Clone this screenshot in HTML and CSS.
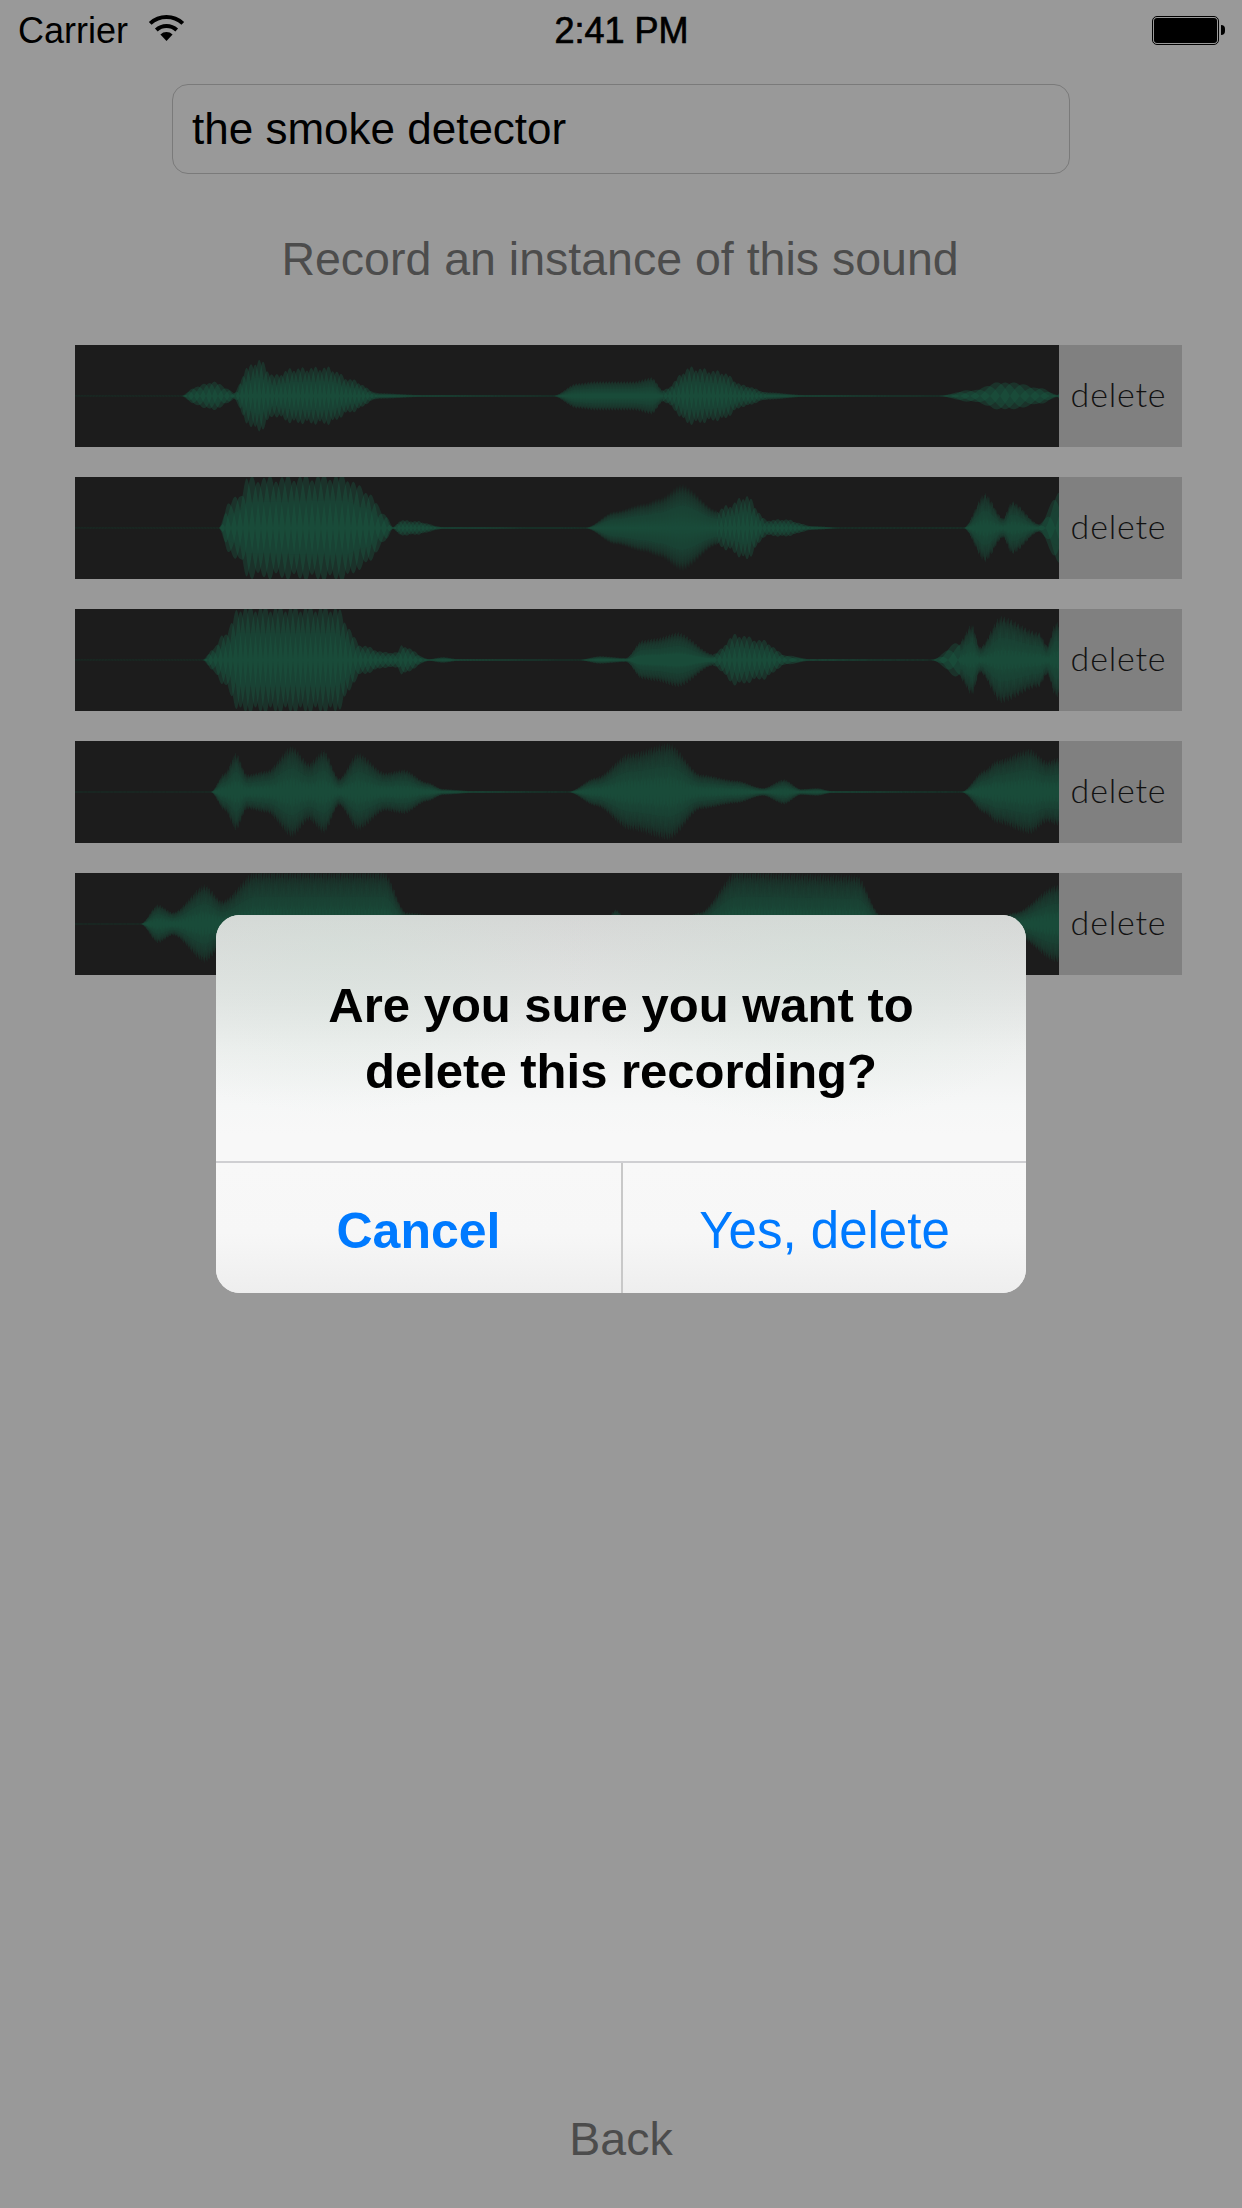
FILE: index.html
```html
<!DOCTYPE html>
<html lang="en">
<head>
  <meta charset="UTF-8">
  <title>Record Sound</title>
  <link rel="stylesheet" href="styles.css">
</head>
<body>
  <div class="status-bar">
    <div class="status-left">
      <span>Carrier</span>
      <svg class="wifi" width="37" height="26" viewBox="0 0 37 26">
        <path d="M2.2 8.4A24 24 0 0 1 34.8 8.4" fill="none" stroke="#000" stroke-width="4"/>
        <path d="M8.3 15A15 15 0 0 1 28.7 15" fill="none" stroke="#000" stroke-width="4"/>
        <path d="M18.5 26L12.4 19.5A9 9 0 0 1 24.6 19.5Z" fill="#000"/>
      </svg>
    </div>
    <div class="status-time">2:41 PM</div>
    <div class="status-right">
      <div class="battery"><div class="battery-level"></div></div>
      <div class="battery-nub"></div>
    </div>
  </div>

  <div class="name-field">the smoke detector</div>
  <div class="prompt">Record an instance of this sound</div>

  <div class="recordings">
    <div class="recording"><svg class="wave" viewBox="0 0 984 102"></svg><div class="delete">delete</div></div>
    <div class="recording"><svg class="wave" viewBox="0 0 984 102"></svg><div class="delete">delete</div></div>
    <div class="recording"><svg class="wave" viewBox="0 0 984 102"></svg><div class="delete">delete</div></div>
    <div class="recording"><svg class="wave" viewBox="0 0 984 102"></svg><div class="delete">delete</div></div>
    <div class="recording"><svg class="wave" viewBox="0 0 984 102"></svg><div class="delete">delete</div></div>
  </div>

  <div class="back">Back</div>

  <div class="alert-layer">
    <div class="alert">
      <div class="alert-message">Are you sure you want to<br>delete this recording?</div>
      <div class="alert-buttons">
        <div class="alert-button cancel">Cancel</div>
        <div class="alert-button confirm">Yes, delete</div>
      </div>
    </div>
  </div>

  <script src="waves.js"></script>
</body>
</html>
```

FILE: styles.css
```css
body {
  margin: 0;
  width: 1242px;
  height: 2208px;
  background-color: #999999;
  font-family: "Liberation Sans", Arial, sans-serif;
  display: flex;
  flex-direction: column;
  overflow: hidden;
  position: relative;
}

.status-bar {
  height: 60px;
  padding: 2px 17px 0 18px;
  box-sizing: border-box;
  display: grid;
  grid-template-columns: 1fr auto 1fr;
  align-items: center;
  color: #000;
  font-size: 36px;
}

.status-left {
  display: flex;
  align-items: center;
  gap: 20px;
}

.wifi {
  margin-top: -6px;
}

.status-time {
  -webkit-text-stroke: 0.7px #000;
}

.status-right {
  display: flex;
  align-items: center;
  justify-content: flex-end;
  gap: 2px;
  margin-top: -2px;
}

.battery {
  width: 63px;
  height: 25px;
  padding: 1px;
  border: 1px solid #000;
  border-radius: 5px;
}

.battery-level {
  height: 100%;
  background-color: #000;
  border-radius: 3px;
}

.battery-nub {
  width: 4px;
  height: 10px;
  background-color: #000;
  border-radius: 0 5px 5px 0;
}

.name-field {
  box-sizing: border-box;
  width: 898px;
  height: 90px;
  margin: 24px auto 0;
  padding-left: 19px;
  display: flex;
  align-items: center;
  border: 1px solid #7a7a7a;
  border-radius: 16px;
  color: #000;
  font-size: 44px;
}

.prompt {
  height: 60px;
  margin-top: 55px;
  padding-right: 2px;
  line-height: 60px;
  text-align: center;
  color: #4c4c4c;
  font-size: 46.5px;
}

.recordings {
  margin: 56px 60px 0 75px;
  display: flex;
  flex-direction: column;
  gap: 30px;
}

.recording {
  height: 102px;
  display: flex;
}

.wave {
  width: 984px;
  height: 102px;
  background-color: #1c1c1c;
  display: block;
}

.delete {
  flex: 1;
  box-sizing: border-box;
  padding: 0 4px 5px 0;
  display: flex;
  align-items: center;
  justify-content: center;
  background-color: #808080;
  color: #111111;
  font-family: Lato, sans-serif;
  font-weight: 300;
  font-size: 34px;
  letter-spacing: 0.8px;
}

.back {
  margin-top: auto;
  margin-bottom: 39px;
  height: 60px;
  line-height: 60px;
  text-align: center;
  color: #4c4c4c;
  font-size: 46.5px;
}

.alert-layer {
  position: absolute;
  inset: 0;
  display: flex;
  align-items: center;
  justify-content: center;
}

.alert {
  width: 810px;
  height: 378px;
  border-radius: 24px;
  overflow: hidden;
  display: flex;
  flex-direction: column;
  background-color: #f8f8f8;
}

.alert-message {
  box-sizing: border-box;
  height: 248px;
  padding-top: 57px;
  border-bottom: 2px solid #cfcfd2;
  text-align: center;
  color: #000;
  font-size: 49px;
  font-weight: bold;
  line-height: 66px;
  background-image:
    radial-gradient(ellipse 260px 170px at 120px 30px, rgba(205, 226, 214, 0.3), transparent),
    radial-gradient(ellipse 260px 170px at 600px 40px, rgba(205, 226, 214, 0.3), transparent),
    linear-gradient(to bottom, #d6d7d6 0, #e2e4e3 80px, #eef0ef 135px, #f6f7f7 190px, #f8f8f8 220px);
}

.alert-buttons {
  flex: 1;
  display: grid;
  grid-template-columns: 1fr 1fr;
  background-image: linear-gradient(to bottom, #f8f8f8 0, #f7f7f7 70px, #eeeeee 130px);
}

.alert-button {
  padding-top: 5px;
  display: flex;
  align-items: center;
  justify-content: center;
  color: #007aff;
  font-size: 51px;
}

.alert-button.cancel {
  font-size: 50px;
  font-weight: bold;
}

.alert-button.confirm {
  border-left: 2px solid #c8c8c8;
}
```

FILE: waves.js
```js
// envelope points are [x, half height], segments are [end x, lobe spacing]
const WAVES = [
  {
    env: [[0,0.3],[107,0.3],[119,9],[138,15],[153,8],[159,3],[172,29],[184,37],[199,21],[218,28],[253,29],[276,17],[303,3],[349,1],[479,0.4],[502,13],[521,15],[559,15],[577,19],[588,6],[615,29],[646,25],[669,11],[692,4],[730,1],[864,0.4],[895,6],[930,15],[964,9],[983,1],[984,3]],
    seg: [[107,3],[159,18],[303,13],[588,3],[692,13],[864,3],[984,30]]
  },
  {
    env: [[0,0.3],[144,0.3],[153,25],[165,35],[172,51],[268,54],[291,39],[310,15],[318,1],[326,8],[341,7],[368,1],[511,0.4],[540,17],[570,25],[584,30],[607,44],[642,18],[653,23],[671,33],[692,8],[709,9],[738,2],[765,0.4],[889,0.4],[910,35],[928,10],[937,27],[964,4],[983,35],[984,35]],
    seg: [[144,3],[318,18],[368,12],[642,3],[738,13],[964,3.5],[984,30]]
  },
  {
    env: [[0,0.3],[128,0.3],[138,12],[150,28],[165,54],[260,54],[287,15],[310,8],[322,8],[327,15],[354,1],[368,3],[383,1],[505,0.4],[525,4],[551,2],[567,20],[580,22],[603,28],[638,6],[661,26],[688,20],[711,5],[734,1],[857,0.4],[884,18],[897,36],[905,13],[926,44],[964,28],[972,15],[981,38],[984,38]],
    seg: [[128,3],[354,15],[638,3],[711,15],[885,30],[984,3.5]]
  },
  {
    env: [[0,0.3],[136,0.3],[150,20],[161,40],[172,18],[192,22],[217,47],[234,30],[249,43],[264,14],[283,40],[310,20],[329,23],[352,10],[368,3],[398,1],[494,0.4],[521,15],[555,40],[594,50],[626,18],[661,12],[688,4],[709,13],[726,3],[742,4],[757,1],[887,0.4],[910,23],[922,33],[955,44],[972,32],[983,35],[984,35]],
    seg: [[984,2.6]]
  },
  {
    env: [[0,0.3],[66,0.3],[83,20],[98,12],[130,40],[147,24],[181,54],[309,54],[331,12],[400,2],[500,0.4],[530,4],[541,15],[552,4],[600,3],[625,12],[662,54],[782,50],[805,10],[880,2],[920,5],[940,12],[982,40],[984,40]],
    seg: [[984,2.6]]
  }
];

const MID = 51;

function envelope(points, x) {
  for (let i = 1; i < points.length; i++) {
    if (x <= points[i][0]) {
      const a = points[i - 1];
      const b = points[i];
      const t = (x - a[0]) / (b[0] - a[0]);
      // smooth the corners so the peaks come out round
      const s = t * t * (3 - 2 * t);
      return a[1] + (b[1] - a[1]) * (0.15 * t + 0.85 * s);
    }
  }
  return 0;
}

function shapePath(samples, heightAt) {
  const top = [];
  const bottom = [];
  samples.forEach(sample => {
    const h = heightAt(sample);
    top.push(sample.x + " " + (MID - h * 1.02).toFixed(1));
    bottom.unshift(sample.x + " " + (MID + h).toFixed(1));
  });
  return "M" + top.join("L") + "L" + bottom.join("L") + "Z";
}

function drawWave(svg, wave) {
  const samples = [];
  let phase = 0;
  let s = 0;
  for (let x = 0; x <= 984; x += 0.5) {
    while (s < wave.seg.length - 1 && x > wave.seg[s][0]) s++;
    phase += 0.5 / wave.seg[s][1] * Math.PI;
    samples.push({ x, e: envelope(wave.env, x), phase });
  }

  // three beating lobes: they pile up near the middle and scallop the edge
  const layers = [
    [sample => sample.e * Math.abs(Math.cos(sample.phase)), 0.34],
    [sample => sample.e * 0.96 * Math.abs(Math.cos(sample.phase + 1.05)), 0.34],
    [sample => sample.e * 0.88 * Math.abs(Math.cos(sample.phase + 2.1)), 0.34],
    [sample => sample.e * 0.5, 0.08]
  ];

  layers.forEach(layer => {
    const path = document.createElementNS("http://www.w3.org/2000/svg", "path");
    path.setAttribute("d", shapePath(samples, layer[0]));
    path.setAttribute("fill", "#1a5e46");
    path.setAttribute("fill-opacity", layer[1]);
    svg.appendChild(path);
  });
}

document.querySelectorAll(".wave").forEach((svg, i) => drawWave(svg, WAVES[i]));
```
